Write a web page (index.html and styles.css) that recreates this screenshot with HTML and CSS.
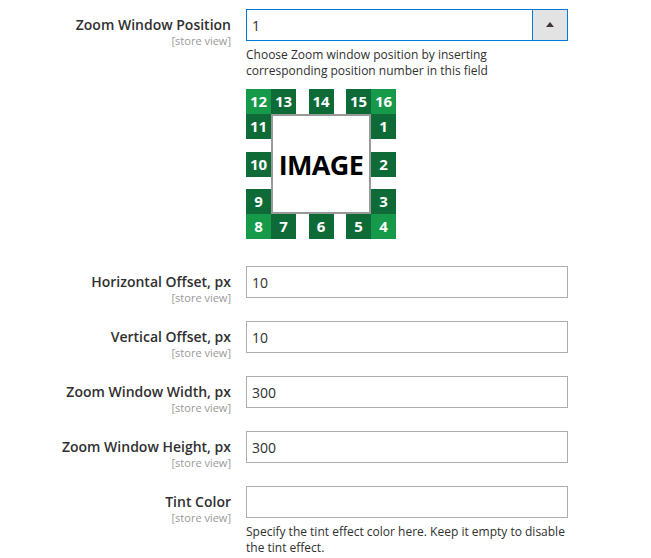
FILE: index.html
```html
<!DOCTYPE html>
<html>
<head>
<meta charset="utf-8">
<link rel="stylesheet" href="styles.css">
</head>
<body>
<div class="form">
  <div class="row">
    <div class="label"><span class="name">Zoom Window Position</span><span class="scope">[store view]</span></div>
    <div class="control">
      <div class="combo">
        <span class="combo-value">1</span>
        <span class="combo-btn"><span class="tri"></span></span>
      </div>
      <div class="note">Choose Zoom window position by inserting corresponding position number in this field</div>
      <div class="positions">
        <div class="tile light" style="grid-area:1/1">12</div>
        <div class="tile" style="grid-area:1/2">13</div>
        <div class="tile" style="grid-area:1/4">14</div>
        <div class="tile" style="grid-area:1/6">15</div>
        <div class="tile light" style="grid-area:1/7">16</div>
        <div class="tile" style="grid-area:2/1">11</div>
        <div class="tile" style="grid-area:2/7">1</div>
        <div class="tile" style="grid-area:4/1">10</div>
        <div class="tile" style="grid-area:4/7">2</div>
        <div class="tile" style="grid-area:6/1">9</div>
        <div class="tile" style="grid-area:6/7">3</div>
        <div class="tile light" style="grid-area:7/1">8</div>
        <div class="tile" style="grid-area:7/2">7</div>
        <div class="tile" style="grid-area:7/4">6</div>
        <div class="tile" style="grid-area:7/6">5</div>
        <div class="tile light" style="grid-area:7/7">4</div>
        <div class="image-box">IMAGE</div>
      </div>
    </div>
  </div>
  <div class="row">
    <div class="label"><span class="name">Horizontal Offset, px</span><span class="scope">[store view]</span></div>
    <div class="control"><div class="input">10</div></div>
  </div>
  <div class="row">
    <div class="label"><span class="name">Vertical Offset, px</span><span class="scope">[store view]</span></div>
    <div class="control"><div class="input">10</div></div>
  </div>
  <div class="row">
    <div class="label"><span class="name">Zoom Window Width, px</span><span class="scope">[store view]</span></div>
    <div class="control"><div class="input">300</div></div>
  </div>
  <div class="row">
    <div class="label"><span class="name">Zoom Window Height, px</span><span class="scope">[store view]</span></div>
    <div class="control"><div class="input">300</div></div>
  </div>
  <div class="row">
    <div class="label"><span class="name">Tint Color</span><span class="scope">[store view]</span></div>
    <div class="control">
      <div class="input"></div>
      <div class="note">Specify the tint effect color here. Keep it empty to disable the tint effect.</div>
    </div>
  </div>
</div>
</body>
</html>
```

FILE: styles.css
```css
html, body {
  margin: 0;
  padding: 0;
  background: #ffffff;
}
body {
  font-family: "Open Sans", "DejaVu Sans", sans-serif;
  color: #303030;
}
.form {
  display: flex;
  flex-direction: column;
  gap: 17px;
  padding-top: 9px;
}
.row {
  display: flex;
  gap: 15px;
}
.label {
  width: 231px;
  flex: none;
  display: flex;
  flex-direction: column;
  align-items: flex-end;
  padding-top: 6px;
  text-align: right;
}
.name {
  font-size: 14px;
  font-weight: 600;
  line-height: 19px;
  color: #303030;
}
.scope {
  font-size: 11px;
  line-height: 13px;
  color: #999999;
}
.control {
  width: 322px;
  flex: none;
}
.input, .combo {
  box-sizing: border-box;
  height: 32px;
  border: 1px solid #adadad;
  font-size: 14px;
  line-height: 31px;
  padding-left: 5px;
  color: #303030;
  background: #fff;
}
.combo {
  display: flex;
  border-color: #007bdb;
  padding-left: 0;
}
.combo-value {
  flex: 1;
  padding-left: 5px;
}
.combo-btn {
  width: 34px;
  flex: none;
  background: #e3e3e3;
  border-left: 1px solid #007bdb;
  display: flex;
  align-items: center;
  justify-content: center;
}
.tri {
  width: 0;
  height: 0;
  border-left: 4px solid transparent;
  border-right: 4px solid transparent;
  border-bottom: 5px solid #41362f;
  margin-top: -1px;
}
.note {
  font-size: 12px;
  line-height: 16px;
  margin-top: 6px;
  color: #303030;
}
.positions {
  margin-top: 10px;
  margin-bottom: 10px;
  width: 150px;
  height: 150px;
  display: grid;
  grid-template-columns: 25px 25px 12.5px 25px 12.5px 25px 25px;
  grid-template-rows: 25px 25px 12.5px 25px 12.5px 25px 25px;
}
.tile {
  background: #0e6b38;
  color: #ffffff;
  font-size: 15px;
  font-weight: 700;
  display: flex;
  align-items: center;
  justify-content: center;
  line-height: 1;
}
.tile.light {
  background: #17994a;
}
.image-box {
  grid-column: 2 / 7;
  grid-row: 2 / 7;
  box-sizing: border-box;
  border: 2px solid #999999;
  background: #fff;
  color: #000;
  font-size: 27px;
  font-weight: 700;
  display: flex;
  align-items: center;
  justify-content: center;
  letter-spacing: -0.6px;
}
```
